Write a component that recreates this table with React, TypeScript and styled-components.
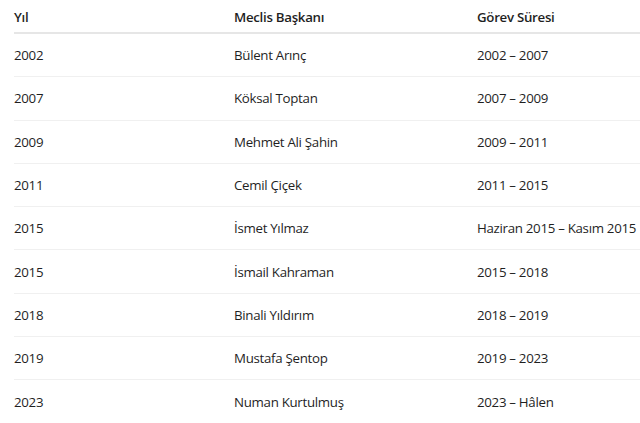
import styled, { createGlobalStyle } from 'styled-components';

const GlobalStyle = createGlobalStyle`
  body {
    margin: 0;
    background: #ffffff;
    font-family: 'Open Sans', 'Noto Sans', sans-serif;
    color: #1f1f1f;
  }
`;

const Wrapper = styled.div`
  padding: 0 0 0 14px;
  overflow: hidden;
`;

const Table = styled.table`
  width: 640px;
  border-collapse: collapse;
  font-size: 13.3px;
  letter-spacing: -0.3px;
  table-layout: fixed;
`;

const HeadCell = styled.th<{ w: number }>`
  width: ${p => p.w}px;
  text-align: left;
  font-weight: 600;
  padding: 7px 0 6px 0;
  height: 19px;
  border-bottom: 2px solid #e6e6e6;
  white-space: nowrap;
`;

const Cell = styled.td`
  padding: 0;
  height: 42.3px;
  border-bottom: 1px solid #f0f0f0;
  white-space: nowrap;
  vertical-align: middle;
`;

const rows = [
  ['2002', 'Bülent Arınç', '2002 – 2007'],
  ['2007', 'Köksal Toptan', '2007 – 2009'],
  ['2009', 'Mehmet Ali Şahin', '2009 – 2011'],
  ['2011', 'Cemil Çiçek', '2011 – 2015'],
  ['2015', 'İsmet Yılmaz', 'Haziran 2015 – Kasım 2015'],
  ['2015', 'İsmail Kahraman', '2015 – 2018'],
  ['2018', 'Binali Yıldırım', '2018 – 2019'],
  ['2019', 'Mustafa Şentop', '2019 – 2023'],
  ['2023', 'Numan Kurtulmuş', '2023 – Hâlen'],
];

export default function App() {
  return (
    <>
      <GlobalStyle />
      <Wrapper>
        <Table>
          <thead>
            <tr>
              <HeadCell w={220}>Yıl</HeadCell>
              <HeadCell w={243}>Meclis Başkanı</HeadCell>
              <HeadCell w={177}>Görev Süresi</HeadCell>
            </tr>
          </thead>
          <tbody>
            {rows.map((r, i) => (
              <tr key={i}>
                <Cell>{r[0]}</Cell>
                <Cell>{r[1]}</Cell>
                <Cell>{r[2]}</Cell>
              </tr>
            ))}
          </tbody>
        </Table>
      </Wrapper>
    </>
  );
}
